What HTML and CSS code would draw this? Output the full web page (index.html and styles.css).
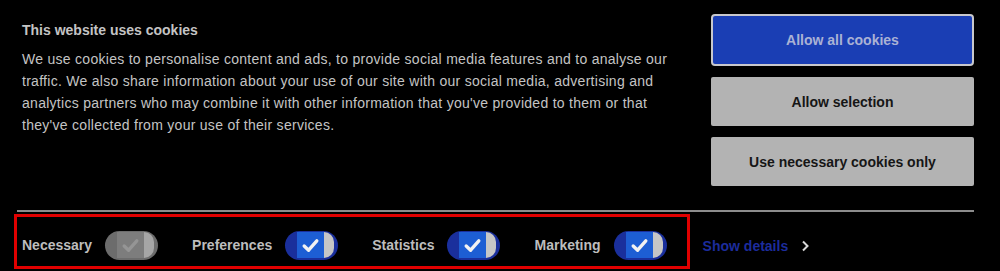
FILE: index.html
```html
<!DOCTYPE html>
<html lang="en">
<head>
<meta charset="utf-8">
<title>Cookie consent</title>
<link rel="stylesheet" href="styles.css">
</head>
<body>
<div class="banner">
  <div class="top">
    <div class="intro">
      <h2 class="title">This website uses cookies</h2>
      <p class="desc">We use cookies to personalise content and ads, to provide social media features and to analyse our traffic. We also share information about your use of our site with our social media, advertising and analytics partners who may combine it with other information that you've provided to them or that they've collected from your use of their services.</p>
    </div>
    <div class="actions">
      <button class="btn btn-primary">Allow all cookies</button>
      <button class="btn btn-secondary">Allow selection</button>
      <button class="btn btn-secondary">Use necessary cookies only</button>
    </div>
  </div>
  <div class="sep"></div>
  <div class="bottom">
    <div class="toggles">
      <label class="item">
        <span class="label">Necessary</span>
        <span class="switch switch-off">
          <span class="sq"><svg viewBox="0 0 20 20" class="check"><path d="M4 10.5 L8.2 14.5 L16 5.5" /></svg></span>
          <span class="knob"></span>
        </span>
      </label>
      <label class="item">
        <span class="label">Preferences</span>
        <span class="switch">
          <span class="sq"><svg viewBox="0 0 20 20" class="check"><path d="M4 10.5 L8.2 14.5 L16 5.5" /></svg></span>
          <span class="knob"></span>
        </span>
      </label>
      <label class="item">
        <span class="label">Statistics</span>
        <span class="switch">
          <span class="sq"><svg viewBox="0 0 20 20" class="check"><path d="M4 10.5 L8.2 14.5 L16 5.5" /></svg></span>
          <span class="knob"></span>
        </span>
      </label>
      <label class="item">
        <span class="label">Marketing</span>
        <span class="switch">
          <span class="sq"><svg viewBox="0 0 20 20" class="check"><path d="M4 10.5 L8.2 14.5 L16 5.5" /></svg></span>
          <span class="knob"></span>
        </span>
      </label>
    </div>
    <a class="details" href="#">Show details <svg class="chev" viewBox="0 0 10 14"><path d="M3 2.5 L7.5 7 L3 11.5" /></svg></a>
  </div>
</div>
</body>
</html>
```
FILE: styles.css
```css
html, body {
  margin: 0;
  padding: 0;
  background: #000;
}
body {
  font-family: "Liberation Sans", Arial, sans-serif;
  width: 1000px;
  height: 271px;
  overflow: hidden;
}
.banner {
  padding: 0 26px 0 14px;
}
.top {
  display: flex;
  align-items: flex-start;
}
.intro {
  padding-left: 8px;
  width: 660px;
}
.title {
  margin: 20px 0 0;
  font-size: 14px;
  line-height: 20px;
  font-weight: bold;
  color: #c4c4c4;
}
.desc {
  margin: 8px 0 0;
  font-size: 14px;
  line-height: 22px;
  color: #c4c4c4;
  letter-spacing: 0.28px;
}
.actions {
  margin-left: auto;
  margin-top: 14px;
  width: 263px;
  display: flex;
  flex-direction: column;
  gap: 11px;
}
.btn {
  font-family: "Liberation Sans", Arial, sans-serif;
  font-size: 14px;
  font-weight: bold;
  border: none;
  border-radius: 2px;
  height: 49px;
  padding: 0;
  width: 100%;
}
.btn-primary {
  height: 52px;
  background: #1a3eb4;
  color: #aab2d4;
  border: 2px solid #c8c8cc;
  border-radius: 4px;
}
.btn-secondary {
  background: #b3b3b3;
  color: #161616;
}
.sep {
  margin: 24px 0 0 3px;
  height: 2px;
  background: #8c8c8c;
  width: 957px;
}
.bottom {
  display: flex;
  align-items: flex-start;
  margin-top: 2px;
}
.toggles {
  display: flex;
  align-items: center;
  gap: 34px;
  border: 3px solid #e00000;
  height: 42px;
  padding: 7px 20px 0 5px;
}
.item {
  display: flex;
  align-items: center;
  gap: 13px;
}
.label {
  font-size: 14px;
  font-weight: bold;
  color: #bdbdbd;
}
.switch {
  display: flex;
  align-items: center;
  width: 53px;
  height: 29px;
  border-radius: 15px;
  background: #1a2f9c;
  box-sizing: border-box;
  padding: 0 4px 0 12px;
}
.sq {
  width: 27px;
  height: 26px;
  background: #1d5ed4;
  display: flex;
  align-items: center;
  justify-content: center;
}
.knob {
  width: 10px;
  height: 26px;
  background: #c6c6c6;
  border-radius: 0 13px 13px 0;
}
.check {
  width: 21px;
  height: 21px;
  fill: none;
  stroke: #f2f2f2;
  stroke-width: 3.2;
  stroke-linecap: round;
  stroke-linejoin: round;
}
.switch-off {
  background: #6c6c6c;
}
.switch-off .sq {
  background: #7d7d7d;
}
.switch-off .check {
  stroke: #959595;
}
.switch-off .knob {
  background: #a6a6a6;
}
.details {
  margin: 24px 0 0 13px;
  font-size: 14px;
  font-weight: bold;
  color: #1c2c9c;
  text-decoration: none;
  display: flex;
  align-items: center;
  gap: 12px;
  line-height: 16px;
}
.chev {
  width: 10px;
  height: 14px;
  fill: none;
  stroke: #d8d8d8;
  stroke-width: 2;
}
```
